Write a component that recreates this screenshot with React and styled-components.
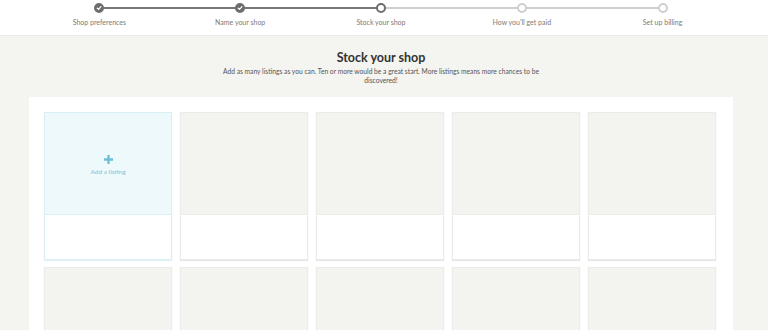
import React from "react";
import styled, { createGlobalStyle } from "styled-components";

const Global = createGlobalStyle`
  html, body { margin: 0; padding: 0; background: #f4f4f0; }
  body { font-family: Lato, "Liberation Sans", Arial, sans-serif; overflow: hidden; }
`;

const Page = styled.div`
  width: 762px;
  display: flex;
  flex-direction: column;
  align-items: center;
`;

const Header = styled.header`
  align-self: stretch;
  width: 768px;
  background: #fff;
  height: 36px;
  border-bottom: 1px solid #ecece8;
  display: flex;
  justify-content: flex-start;
  box-sizing: border-box;
  padding-left: 29px;
`;

const Stepper = styled.ol`
  list-style: none;
  margin: 0;
  padding: 0;
  width: 704px;
  display: grid;
  grid-template-columns: repeat(5, 1fr);
`;

const Step = styled.li`
  position: relative;
  display: flex;
  flex-direction: column;
  align-items: center;
  padding-top: 3px;
  &::before, &::after {
    content: "";
    position: absolute;
    top: 7px;
    height: 2px;
  }
  &::before {
    left: 0;
    right: 50%;
    background: ${(p) => (p.$first ? "transparent" : p.$leftDone ? "#777" : "#cfcfcb")};
  }
  &::after {
    left: 50%;
    right: 0;
    background: ${(p) => (p.$last ? "transparent" : p.$rightDone ? "#777" : "#cfcfcb")};
  }
`;

const Dot = styled.span`
  position: relative;
  z-index: 1;
  box-sizing: border-box;
  width: 10px;
  height: 10px;
  border-radius: 50%;
  display: flex;
  align-items: center;
  justify-content: center;
  background: ${(p) => (p.$state === "done" ? "#6e6e6e" : "#fff")};
  border: 2px solid ${(p) => (p.$state === "todo" ? "#cfcfcb" : "#6e6e6e")};
`;

const StepLabel = styled.span`
  margin-top: 5px;
  font-size: 7px;
  color: #7a7a7a;
`;

const Title = styled.h1`
  margin: 13px 0 0;
  font-size: 12.5px;
  font-weight: 700;
  color: #333;
  line-height: 18px;
`;

const Sub = styled.p`
  margin: 0;
  width: 340px;
  text-align: center;
  font-size: 6.7px;
  line-height: 9px;
  color: #555;
`;

const Panel = styled.section`
  margin-top: 12px;
  width: 704px;
  box-sizing: border-box;
  background: #fff;
  padding: 15px 16px 15px 15px;
  display: grid;
  grid-template-columns: repeat(5, 128px);
  column-gap: 8px;
  row-gap: 7px;
`;

const Card = styled.div`
  box-sizing: border-box;
  height: 148px;
  display: flex;
  flex-direction: column;
  border: 1px solid ${(p) => (p.$add ? "#d9eef5" : "#ebebe7")};
  box-shadow: 0 1px 1px ${(p) => (p.$add ? "#e2f1f7" : "#e6e6e3")};
  background: #fff;
`;

const CardImage = styled.div`
  height: 102px;
  background: ${(p) => (p.$add ? "#eef9fc" : "#f3f3ef")};
  border-bottom: 1px solid ${(p) => (p.$add ? "#dcf0f6" : "#ececE8")};
  display: flex;
  flex-direction: column;
  align-items: center;
  justify-content: center;
  padding-top: 2px;
  box-sizing: border-box;
`;

const Plus = styled.svg`
  width: 11px;
  height: 11px;
`;

const AddText = styled.span`
  margin-top: 3px;
  font-size: 6.5px;
  color: #7dc3d8;
`;

const Check = () => (
  <svg width="6" height="6" viewBox="0 0 10 10">
    <path d="M2 5.2 L4.2 7.3 L8.2 2.8" fill="none" stroke="#fff" strokeWidth="2" strokeLinecap="round" strokeLinejoin="round" />
  </svg>
);

const steps = [
  { label: "Shop preferences", state: "done" },
  { label: "Name your shop", state: "done" },
  { label: "Stock your shop", state: "current" },
  { label: "How you'll get paid", state: "todo" },
  { label: "Set up billing", state: "todo" },
];

export default function App() {
  return (
    <>
      <Global />
      <Page>
        <Header>
          <Stepper>
            {steps.map((s, i) => (
              <Step
                key={s.label}
                $first={i === 0}
                $last={i === steps.length - 1}
                $leftDone={i > 0 && steps[i - 1].state === "done"}
                $rightDone={s.state === "done"}
              >
                <Dot $state={s.state}>{s.state === "done" && <Check />}</Dot>
                <StepLabel>{s.label}</StepLabel>
              </Step>
            ))}
          </Stepper>
        </Header>
        <Title>Stock your shop</Title>
        <Sub>
          Add as many listings as you can. Ten or more would be a great start. More listings means more chances to be discovered!
        </Sub>
        <Panel>
          {Array.from({ length: 10 }).map((_, i) => (
            <Card key={i} $add={i === 0}>
              <CardImage $add={i === 0}>
                {i === 0 && (
                  <>
                    <Plus viewBox="0 0 12 12">
                      <path d="M6 1 V11 M1 6 H11" stroke="#6cc0d8" strokeWidth="2.6" />
                    </Plus>
                    <AddText>Add a listing</AddText>
                  </>
                )}
              </CardImage>
            </Card>
          ))}
        </Panel>
      </Page>
    </>
  );
}
